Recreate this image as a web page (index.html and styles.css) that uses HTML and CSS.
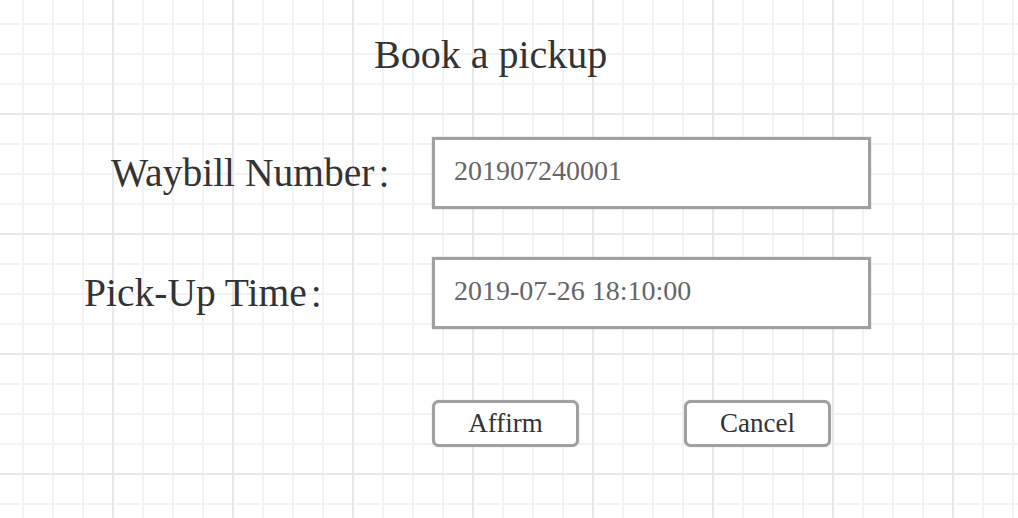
FILE: index.html
```html
<!DOCTYPE html>
<html lang="en">
<head>
<meta charset="utf-8">
<title>Book a pickup</title>
<link rel="stylesheet" href="styles.css">
</head>
<body>
<main class="page">
  <h1 class="title">Book a pickup</h1>
  <form class="form">
    <label class="label label-waybill">Waybill Number<span class="colon">：</span></label>
    <div class="field">201907240001</div>
    <label class="label label-time">Pick-Up Time<span class="colon">：</span></label>
    <div class="field">2019-07-26 18:10:00</div>
    <div class="actions">
      <button type="button" class="btn">Affirm</button>
      <button type="button" class="btn">Cancel</button>
    </div>
  </form>
</main>
</body>
</html>
```
FILE: styles.css
```css
html, body {
  margin: 0;
  padding: 0;
}
body {
  width: 1018px;
  height: 518px;
  overflow: hidden;
  font-family: "Liberation Serif", "Times New Roman", serif;
  color: #333;
  background-color: #fff;
  background-image:
    linear-gradient(to right, #e8e8e8 0 2px, transparent 2px),
    linear-gradient(to bottom, #e8e8e8 0 2px, transparent 2px),
    linear-gradient(to right, #f3f3f3 0 2px, transparent 2px),
    linear-gradient(to bottom, #f3f3f3 0 2px, transparent 2px);
  background-size: 120px 120px, 120px 120px, 30px 30px, 30px 30px;
  background-position: 112px 113px, 112px 113px, 22px 23px, 22px 23px;
}
.page {
  display: flex;
  flex-direction: column;
  padding-top: 18px;
}
.title {
  margin: 0;
  height: 72px;
  display: flex;
  align-items: center;
  padding-left: 374px;
  font-size: 40px;
  font-weight: normal;
}
.form {
  margin-top: 47px;
  display: grid;
  grid-template-columns: 432px 439px;
  grid-template-rows: 72px 72px 47px;
  row-gap: 48px;
}
.label {
  display: flex;
  align-items: center;
  font-size: 39.5px;
  white-space: nowrap;
}
.label-waybill { padding-left: 111px; }
.label-time { padding-left: 84px; }
.colon {
  font-family: "Noto Sans CJK SC", sans-serif;
  font-size: 30px;
  margin-left: 2px;
  padding-bottom: 1px;
}
.field {
  box-sizing: border-box;
  display: flex;
  align-items: center;
  padding: 0 0 5px 19px;
  border: 3px solid #a0a0a0;
  box-shadow: 0 0 1px #a0a0a0;
  background: #fff;
  font-size: 28px;
  color: #666;
}
.actions {
  grid-column: 2;
  display: flex;
  gap: 105px;
  margin-top: 23px;
}
.btn {
  box-sizing: border-box;
  width: 147px;
  height: 47px;
  padding: 0;
  border: 3px solid #a0a0a0;
  border-radius: 7px;
  box-shadow: 0 0 1px #a0a0a0;
  background: #fff;
  font-family: "Liberation Serif", "Times New Roman", serif;
  font-size: 27px;
  color: #333;
}
```
